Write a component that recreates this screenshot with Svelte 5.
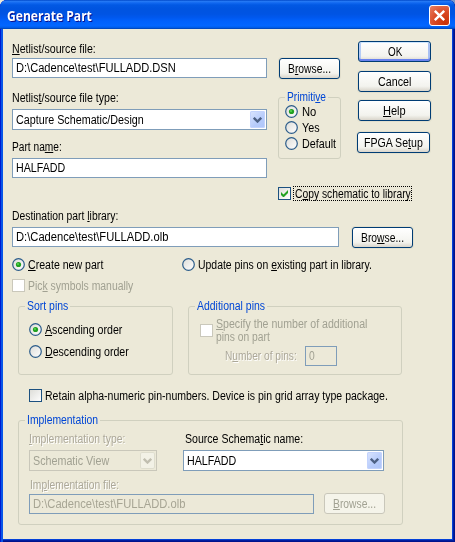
<script>
  // Squeezes a label's glyphs horizontally to the width its slot reserves.
  function fit(node, width) {
    node.style.transform = `scaleX(${width / node.offsetWidth})`;
  }
  // "&" marks the access key, as in a dialog resource file.
  function parts(label) {
    const i = label.indexOf('&');
    return i < 0 ? [label, '', ''] : [label.slice(0, i), label[i + 1], label.slice(i + 2)];
  }
  let primitive = $state('No');
  let target = $state('create');
  let order = $state('asc');
  let copy = $state(true);
  let retain = $state(false);
</script>

{#snippet txt(label, w)}
  {@const p = parts(label)}
  <span class="txt" style="width:{w}px"><span class="glyphs" use:fit={w}>{p[0]}{#if p[1]}<u>{p[1]}</u>{/if}{p[2]}</span></span>
{/snippet}

{#snippet radio(label, w, on, pick)}
  <button class="opt" role="radio" aria-checked={on} onclick={pick}>
    <svg width="13" height="13" viewBox="0 0 13 13">
      <circle cx="6.5" cy="6.5" r="5.8" fill="url(#face)" stroke="#2b5c8a" stroke-width="1.2" />
      {#if on}<circle cx="6.5" cy="6.5" r="2.6" fill="#21a121" /><circle cx="6" cy="6" r="1.1" fill="#55d551" />{/if}
    </svg>
    {@render txt(label, w)}
  </button>
{/snippet}

{#snippet box(on, off)}
  <svg class="box" width="13" height="13" viewBox="0 0 13 13">
    <rect x=".5" y=".5" width="12" height="12" fill={off ? '#fff' : 'url(#face)'} stroke={off ? '#cac8bb' : '#1c5180'} />
    {#if on}<path d="M3 5v3l2 2h1l4-4V3L5.5 7.5z" fill="#21a121" />{/if}
  </svg>
{/snippet}

{#snippet arrow()}
  <span class="arrow"><svg width="9" height="6" viewBox="0 0 9 6"><path d="M.8.8 4.5 4.5 8.2.8" fill="none" stroke="currentColor" stroke-width="2.4" /></svg></span>
{/snippet}

<div class="desk">
  <div class="window">
    <svg class="defs" width="0" height="0">
      <linearGradient id="face" x1="0" y1="0" x2="1" y2="1"><stop offset="0" stop-color="#dcdcd7" /><stop offset="1" stop-color="#fff" /></linearGradient>
    </svg>
    <header>
      <span class="title">{@render txt('Generate Part', 85)}</span>
      <button class="close" aria-label="Close">
        <svg width="19" height="19" viewBox="0 0 19 19"><path d="M4.8 4.8l9.4 9.4M14.2 4.8l-9.4 9.4" stroke="#fff" stroke-width="2.4" /></svg>
      </button>
    </header>

    <main>
      <div class="top">
        <div class="fields">
          {@render txt('&Netlist/source file:', 84)}
          <div class="input first">{@render txt('D:\\Cadence\\test\\FULLADD.DSN', 160)}</div>
          {@render txt('Netlis&t/source file type:', 107)}
          <div class="select type">{@render txt('Capture Schematic/Design', 128)}{@render arrow()}</div>
          {@render txt('Part na&me:', 50)}
          <div class="input">{@render txt('HALFADD', 49)}</div>
        </div>
        <div class="middle">
          <button class="btn browse">{@render txt('B&rowse...', 43)}</button>
          <section class="group primitive">
            <div class="legend">{@render txt('Primiti&ve', 39)}</div>
            {@render radio('No', 14, primitive === 'No', () => (primitive = 'No'))}
            {@render radio('Yes', 18, primitive === 'Yes', () => (primitive = 'Yes'))}
            {@render radio('Default', 34, primitive === 'Default', () => (primitive = 'Default'))}
          </section>
          <button class="opt copy" onclick={() => (copy = !copy)}>{@render box(copy)}<span class="focus">{@render txt('C&opy schematic to library', 116)}</span></button>
        </div>
        <div class="actions">
          <button class="btn default">{@render txt('OK', 14)}</button>
          <button class="btn cancel">{@render txt('Cancel', 33)}</button>
          <button class="btn help">{@render txt('&Help', 23)}</button>
          <button class="btn fpga">{@render txt('FPGA Se&tup', 59)}</button>
        </div>
      </div>

      {@render txt('Destination part &library:', 106)}
      <div class="dest">
        <div class="input">{@render txt('D:\\Cadence\\test\\FULLADD.olb', 152)}</div>
        <button class="btn browse">{@render txt('Bro&wse...', 43)}</button>
      </div>
      <div class="mode">
        {@render radio('&Create new part', 75, target === 'create', () => (target = 'create'))}
        {@render radio('Update pins on &existing part in library.', 174, target === 'update', () => (target = 'update'))}
      </div>
      <div class="opt pick off">{@render box(false, true)}{@render txt('Pic&k symbols manually', 105)}</div>

      <div class="groups">
        <section class="group sort">
          <div class="legend">{@render txt('Sort pins', 41)}</div>
          {@render radio('&Ascending order', 77, order === 'asc', () => (order = 'asc'))}
          {@render radio('&Descending order', 84, order === 'desc', () => (order = 'desc'))}
        </section>
        <section class="group additional off">
          <div class="legend">{@render txt('Additional pins', 68)}</div>
          <div class="specify">
            {@render box(false, true)}
            <div class="lines">{@render txt('&Specify the number of additional', 151)}{@render txt('pins on part', 54)}</div>
          </div>
          <div class="count"><span class="etched">{@render txt('N&umber of pins:', 72)}</span><div class="input">{@render txt('0', 6)}</div></div>
        </section>
      </div>

      <button class="opt retain" onclick={() => (retain = !retain)}>{@render box(retain)}{@render txt('Retain alpha-numeric pin-numbers. Device is pin grid array type package.', 343)}</button>

      <section class="group impl">
        <div class="legend">{@render txt('Implementation', 71)}</div>
        <div class="pair">
          <div class="kind etched">
            {@render txt('&Implementation type:', 96)}
            <div class="select off">{@render txt('Schematic View', 76)}{@render arrow()}</div>
          </div>
          <div class="source">
            {@render txt('Source Schema&tic name:', 118)}
            <div class="select">{@render txt('HALFADD', 49)}{@render arrow()}</div>
          </div>
        </div>
        <div class="etched filelabel">{@render txt('Im&plementation file:', 89)}</div>
        <div class="file">
          <div class="input">{@render txt('D:\\Cadence\\test\\FULLADD.olb', 152)}</div>
          <button class="btn browse" disabled>{@render txt('&Browse...', 43)}</button>
        </div>
      </section>
    </main>
  </div>
</div>

<style>
  :global(body) { margin: 0; }
  .desk { width: 455px; height: 542px; background: linear-gradient(90deg, #ece9d8 50%, #7b98c8 50%); }
  .desk, .desk * { box-sizing: border-box; }
  .window {
    height: 542px; display: flex; flex-direction: column; overflow: hidden;
    border-radius: 7px 7px 0 0; background: #0831d9; padding: 0 3px 3px;
    box-shadow: inset 1px 0 #0019cf, inset 3px 0 #0855e8, inset -1px -1px #00138c, inset -2px -2px #001ea0, inset -3px -3px #0441d8;
    font: 12px/14px "Liberation Sans", Arial, sans-serif; color: #000;
  }
  .defs { display: block; height: 0; flex: none; }
  header {
    flex: none; height: 29px; margin: 0 -3px; padding: 2px 5px 0 7px; display: flex; align-items: center; justify-content: space-between;
    background: linear-gradient(#0048c8 0, #2478f4 5%, #1168f0 10%, #0259e4 17%, #0054e0 30%, #0054e3 48%, #0058ee 60%, #0060fb 72%, #0266ff 88%, #0060f0 94%, #0050d0 97%, #0040ab 100%);
  }
  .title { font: bold 13.5px/16px "Open Sans", "Noto Sans", sans-serif; color: #fff; text-shadow: 1px 1px #0f1089; }
  .title .txt { height: 16px; }
  button { font: inherit; color: inherit; border: 0; background: none; padding: 0; margin: 0; text-align: left; }
  .close { width: 21px; height: 21px; border: 1px solid #fff; border-radius: 3px; background: radial-gradient(circle at 80% 90%, #c93105, #da4a25 50%, #e88063); }
  svg { display: block; flex: none; }
  .txt { display: block; height: 14px; white-space: nowrap; flex: none; }
  .glyphs { display: inline-block; transform-origin: 0 0; }
  u { text-decoration-thickness: 1px; text-underline-offset: 1px; }

  main { flex: 1; background: #ece9d8; padding: 12px 9px 0; }
  .input, .select { border: 1px solid #7f9db9; background: #fff; display: flex; align-items: center; }
  .input { height: 20px; padding-left: 3px; }
  .select { height: 21px; padding: 0 1px 0 4px; justify-content: space-between; }
  .arrow { width: 15px; height: 17px; border-radius: 2px; display: flex; align-items: center; justify-content: center; color: #4d6185; background: linear-gradient(135deg, #dbe5fe, #b6cbfb 60%, #aec5f9); box-shadow: inset 0 0 0 1px #c3d3fd; }
  .btn {
    width: 73px; height: 21px; display: flex; align-items: center; justify-content: center; flex: none;
    border: 1px solid #003c74; border-radius: 3px; background: linear-gradient(#fff, #f3f3ee 75%, #d9d5cb);
    box-shadow: 0 0 0 1px rgba(220, 216, 198, .6);
  }
  .browse { width: 61px; }
  .btn.default { box-shadow: inset 0 1px #cee7ff, inset 0 -2px #6982ee, inset 2px 0 #b5ccf5, inset -2px 0 #a8c0f2; }
  .btn:disabled { border-color: #c9c7ba; background: #f5f4ea; color: #a1a192; box-shadow: none; }
  .off { color: #a1a192; }
  .opt { display: flex; align-items: flex-start; gap: 3px; height: 14px; }

  .top { display: flex; height: 168px; }
  .fields { width: 255px; padding-top: 1px; }
  .first { margin: 2px 0 13px; }
  .type { margin: 5px 0 10px; padding-left: 3px; }
  .fields .input:last-child { margin-top: 4px; }
  .middle { width: 79px; margin-left: 11px; padding-top: 17px; }
  .middle .browse { margin-left: 1px; }
  .group { border: 1px solid #d0d0bf; border-radius: 3px; display: flex; flex-direction: column; }
  .legend { color: #0046d5; background: #ece9d8; margin-top: -8px; margin-left: 6px; padding: 0 2px; align-self: flex-start; }
  .primitive { width: 63px; height: 62px; margin-top: 18px; gap: 2px; }
  .primitive .opt { margin-left: 6px; gap: 4px; }
  .primitive .legend { margin-bottom: -1px; }
  .copy { margin-top: 27px; height: 15px; gap: 2px; align-items: center; }
  .focus { border: 1px dotted #000; padding: 0 1px; height: 15px; width: 119px; flex: none; }
  .actions { margin-left: 1px; }
  .actions .cancel { margin-top: 9px; }
  .actions .help { margin-top: 8px; }
  .actions .fpga { margin: 11px 0 0 -1px; }
  .dest { display: flex; gap: 13px; margin-top: 4px; }
  .dest .input { width: 327px; }
  .mode { display: flex; margin-top: 10px; }
  .mode .opt:first-child { width: 170px; }
  .pick { margin-top: 7px; }
  .groups { display: flex; gap: 15px; margin: 13px 0 0 6px; }
  .sort { width: 155px; height: 69px; }
  .sort .opt { margin: 8px 0 0 10px; }
  .sort .legend { margin-bottom: 2px; }
  .additional { width: 214px; height: 69px; }
  .specify { display: flex; gap: 3px; margin: 4px 0 0 11px; }
  .specify .box { margin-top: 7px; }
  .specify .box { flex: none; }
  .lines .txt { height: 13px; }
  .lines { height: 26px; }
  .count { display: flex; align-items: center; gap: 8px; margin: 3px 0 0 36px; }
  .specify { height: 26px; }
  .count .input { width: 32px; background: #ece9d8; }
  .etched { color: #aca899; text-shadow: 1px 1px #fff; }
  .count .etched { margin-top: -1px; }
  .retain { margin: 14px 0 0 17px; }
  .impl { width: 385px; height: 105px; margin: 17px 0 0 6px; }
  .pair { display: flex; gap: 26px; margin: 5px 0 0 10px; }
  .kind { width: 128px; }
  .source { width: 201px; }
  .source > .txt { margin-left: 2px; }
  .select { margin-top: 4px; }
  .source .select, .kind .select { padding-left: 3px; }
  .etched .select { background: #ece9d8; border-color: #c9c7ba; text-shadow: none; }
  .etched .arrow { color: #c0beb0; background: #f2f1e6; box-shadow: inset 0 0 0 1px #deddce; }
  .filelabel { margin: 7px 0 0 11px; }
  .file { display: flex; gap: 10px; margin: 1px 0 0 10px; }
  .file .input { width: 285px; margin-top: 1px; background: #ece9d8; color: #a7a594; }
</style>
